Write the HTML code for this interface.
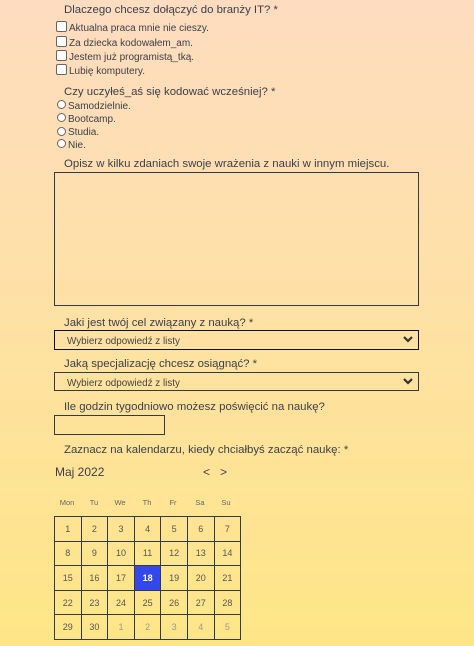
<!DOCTYPE html>
<html><head><meta charset="utf-8"><style>
*{margin:0;padding:0;box-sizing:border-box}
html,body{width:474px;height:646px;overflow:hidden}
body{background:linear-gradient(#fedcc0,#fee687);font-family:"Liberation Sans",sans-serif;color:#3a3f4a;position:relative}
.a{position:absolute;white-space:nowrap}
.l{font-size:11.4px;left:64px}
.o{font-size:10px;left:69px}
.cb{position:absolute;left:56px;width:11px;height:11px;border:1px solid #666;border-radius:2px;background:#fff}
.rb{position:absolute;left:57px;width:9px;height:9px;border:1px solid #666;border-radius:50%;background:#fff}
.o2{font-size:10px;left:68px}
.box{position:absolute;border:1.3px solid #333a48}
.sel{font-size:9.9px;padding:5px 0 0 12px;color:#444}
.chev{position:absolute;right:4px;top:4px}
table{position:absolute;left:54px;top:516px;border-collapse:collapse}
td{width:26.6px;height:24.6px;border:1.4px solid #333a48;text-align:center;font-size:9px;color:#555}
td.g{color:#999}
td.s{background:#3447ea;color:#fff;font-weight:bold}
.d{font-size:7.5px;color:#666;top:498px;width:26px;text-align:center}
</style></head><body>
<div class="a l" style="top:4px">Dlaczego chcesz dołączyć do branży IT? *</div>
<div class="cb" style="top:21px"></div><div class="a o" style="top:23px">Aktualna praca mnie nie cieszy.</div>
<div class="cb" style="top:36px"></div><div class="a o" style="top:38px">Za dziecka kodowałem_am.</div>
<div class="cb" style="top:50px"></div><div class="a o" style="top:52px">Jestem już programistą_tką.</div>
<div class="cb" style="top:64px"></div><div class="a o" style="top:66px">Lubię komputery.</div>
<div class="a l" style="top:86px">Czy uczyłeś_aś się kodować wcześniej? *</div>
<div class="rb" style="top:100px"></div><div class="a o2" style="top:101px">Samodzielnie.</div>
<div class="rb" style="top:113px"></div><div class="a o2" style="top:114px">Bootcamp.</div>
<div class="rb" style="top:127px"></div><div class="a o2" style="top:127px">Studia.</div>
<div class="rb" style="top:139px"></div><div class="a o2" style="top:140px">Nie.</div>
<div class="a l" style="top:158px">Opisz w kilku zdaniach swoje wrażenia z nauki w innym miejscu.</div>
<div class="box" style="left:54px;top:172px;width:365px;height:134px"></div>
<div class="a l" style="top:317px">Jaki jest twój cel związany z nauką? *</div>
<div class="box sel" style="left:54px;top:330px;width:365px;height:20px;border-color:#111;border-width:1.6px">Wybierz odpowiedź z listy<svg class="chev" width="12" height="9" viewBox="0 0 12 9"><path d="M2 2l4 4 4-4" stroke="#333" stroke-width="2.2" fill="none"/></svg></div>
<div class="a l" style="top:358px">Jaką specjalizację chcesz osiągnąć? *</div>
<div class="box sel" style="left:54px;top:372px;width:365px;height:19px">Wybierz odpowiedź z listy<svg class="chev" width="12" height="9" viewBox="0 0 12 9"><path d="M2 2l4 4 4-4" stroke="#333" stroke-width="2.2" fill="none"/></svg></div>
<div class="a l" style="top:401px">Ile godzin tygodniowo możesz poświęcić na naukę?</div>
<div class="box" style="left:54px;top:415px;width:111px;height:20px"></div>
<div class="a l" style="top:444px">Zaznacz na kalendarzu, kiedy chciałbyś zacząć naukę: *</div>
<div class="a" style="left:55px;top:465px;font-size:12px">Maj 2022</div>
<div class="a" style="left:203px;top:465px;font-size:12px">&lt;&nbsp;&nbsp;&nbsp;&gt;</div>
<div class="a d" style="left:54px">Mon</div><div class="a d" style="left:81px">Tu</div><div class="a d" style="left:107px">We</div><div class="a d" style="left:134px">Th</div><div class="a d" style="left:160px">Fr</div><div class="a d" style="left:187px">Sa</div><div class="a d" style="left:213px">Su</div>
<table>
<tr><td>1</td><td>2</td><td>3</td><td>4</td><td>5</td><td>6</td><td>7</td></tr>
<tr><td>8</td><td>9</td><td>10</td><td>11</td><td>12</td><td>13</td><td>14</td></tr>
<tr><td>15</td><td>16</td><td>17</td><td class="s">18</td><td>19</td><td>20</td><td>21</td></tr>
<tr><td>22</td><td>23</td><td>24</td><td>25</td><td>26</td><td>27</td><td>28</td></tr>
<tr><td>29</td><td>30</td><td class="g">1</td><td class="g">2</td><td class="g">3</td><td class="g">4</td><td class="g">5</td></tr>
</table>
</body></html>
